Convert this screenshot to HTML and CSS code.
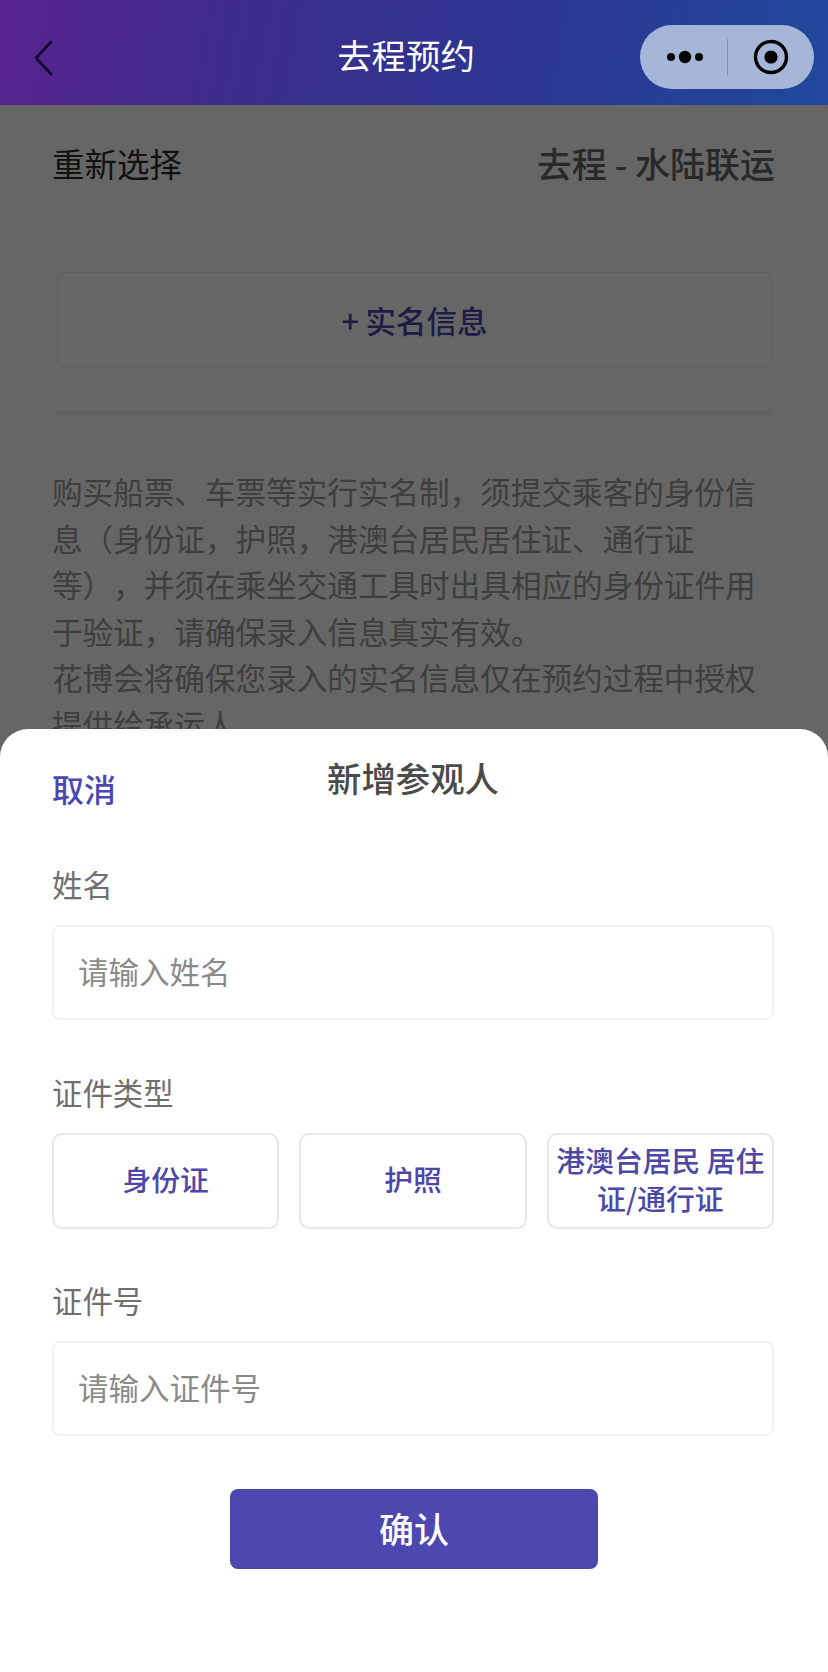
FILE: index.html
```html
<!DOCTYPE html>
<html lang="zh-CN">
<head>
<meta charset="utf-8">
<title>去程预约</title>
<link rel="stylesheet" href="styles.css">
</head>
<body>
<div class="app">
  <header class="nav">
    <svg class="back" viewBox="0 0 20 36" width="20" height="36"><path d="M18 2 L3 18 L18 34" fill="none" stroke="#14082e" stroke-width="2.6" stroke-linecap="round" stroke-linejoin="round"/></svg>
    <h1 class="nav-title">去程预约</h1>
    <div class="capsule">
      <svg class="more" viewBox="0 0 38 14" width="38" height="14"><circle cx="5" cy="7" r="4" fill="#000"/><circle cx="19" cy="7" r="6.2" fill="#000"/><circle cx="33" cy="7" r="4" fill="#000"/></svg>
      <span class="capsule-line"></span>
      <svg class="target" viewBox="0 0 36 36" width="36" height="36"><circle cx="18" cy="18" r="15.5" fill="none" stroke="#000" stroke-width="3.4"/><circle cx="18" cy="18" r="6.6" fill="#000"/></svg>
    </div>
  </header>
  <main class="page">
    <div class="route-row">
      <span class="reselect">重新选择</span>
      <span class="route">去程 - 水陆联运</span>
    </div>
    <div class="add-box">+ 实名信息</div>
    <div class="divider"></div>
    <p class="notice">购买船票、车票等实行实名制，须提交乘客的身份信息（身份证，护照，港澳台居民居住证、通行证<br>等），并须在乘坐交通工具时出具相应的身份证件用<br>于验证，请确保录入信息真实有效。<br>花博会将确保您录入的实名信息仅在预约过程中授权提供给承运人</p>
    <div class="mask"></div>
    <section class="sheet">
      <div class="sheet-head">
        <span class="cancel">取消</span>
        <span class="sheet-title">新增参观人</span>
      </div>
      <div class="label label-name">姓名</div>
      <div class="field">请输入姓名</div>
      <div class="label label-type">证件类型</div>
      <div class="types">
        <div class="type">身份证</div>
        <div class="type">护照</div>
        <div class="type">港澳台居民 居住证/通行证</div>
      </div>
      <div class="label label-no">证件号</div>
      <div class="field">请输入证件号</div>
      <div class="confirm">确认</div>
    </section>
  </main>
</div>
</body>
</html>
```

FILE: styles.css
```css
* { box-sizing: border-box; }
html, body { margin: 0; padding: 0; }
body {
  font-family: "Noto Sans CJK SC", "Noto Sans", sans-serif;
  background: #fff;
  text-spacing-trim: space-all;
}
.app {
  width: 828px;
  height: 1672px;
  display: flex;
  flex-direction: column;
  overflow: hidden;
}
.nav {
  height: 105px;
  flex: none;
  display: flex;
  align-items: center;
  justify-content: center;
  position: relative;
  background: linear-gradient(100deg, #58238f 0%, #3d2c8c 28%, #2d3590 60%, #20489c 100%);
}
.back {
  position: absolute;
  left: 33px;
  top: 40px;
}
.nav-title {
  margin: 2px 16px 0 0;
  font-size: 34.4px;
  font-weight: 400;
  line-height: 44px;
  color: #fff;
}
.capsule {
  position: absolute;
  left: 640px;
  top: 25px;
  width: 174px;
  height: 64px;
  border-radius: 32px;
  background: #a5b6d8;
  display: flex;
  align-items: center;
}
.more { margin-left: 26px; flex: none; }
.capsule-line {
  width: 1px;
  height: 36px;
  margin-left: 23px;
  background: #7f8eae;
  flex: none;
}
.target { margin-left: 25px; flex: none; }
.page {
  flex: 1;
  position: relative;
  background: #fff;
}
.route-row {
  height: 120px;
  padding: 0 53px 4px 52px;
  display: flex;
  justify-content: space-between;
  align-items: center;
}
.reselect { font-size: 32.5px; line-height: 44px; color: #2b2b2b; }
.route { font-size: 35px; line-height: 44px; color: #666; font-weight: 500; }
.add-box {
  margin: 47px 56px 0 57px;
  height: 95px;
  border: 1px solid #e8e8e8;
  border-radius: 8px;
  display: flex;
  align-items: center;
  justify-content: center;
  font-size: 30.5px;
  font-weight: 500;
  color: #4d48b0;
}
.divider {
  margin: 44px 56px 0 57px;
  height: 10px;
  background: linear-gradient(#f0f0f0, #fff);
}
.notice {
  margin: 0;
  padding: 0 53px 0 52px;
  position: relative;
  top: 47px;
  font-size: 30.6px;
  line-height: 46.5px;
  color: #9c9c9c;
}
.mask {
  position: absolute;
  inset: 0;
  background: rgba(0, 0, 0, .6);
}
.sheet {
  position: absolute;
  left: 0;
  right: 0;
  top: 624px;
  bottom: 0;
  background: #fff;
  border-radius: 28px 28px 0 0;
  padding: 0 54px 0 52px;
}
.sheet-head {
  position: relative;
  height: 107px;
}
.cancel {
  position: absolute;
  left: 0;
  top: 36px;
  font-size: 32px;
  line-height: 46px;
  font-weight: 500;
  color: #4d48b0;
}
.sheet-title {
  position: absolute;
  left: 0;
  right: 0;
  top: 25px;
  text-align: center;
  font-size: 34.4px;
  line-height: 46px;
  color: #4a4a4a;
  font-weight: 500;
}
.label {
  font-size: 30.4px;
  line-height: 44px;
  color: #6f6f6f;
}
.label-name { margin-top: 26px; margin-bottom: 19px; }
.label-type { margin-top: 50px; margin-bottom: 19px; }
.label-no { margin-top: 49px; margin-bottom: 19px; }
.field {
  height: 95px;
  border: 2px solid #f1f1f1;
  border-radius: 8px;
  padding: 0 0 4px 24px;
  display: flex;
  align-items: center;
  font-size: 30.5px;
  color: #8a8a8a;
}
.types {
  display: grid;
  grid-template-columns: repeat(3, 1fr);
  gap: 20px;
}
.type {
  height: 96px;
  border: 2px solid #e6e6e6;
  border-radius: 10px;
  display: flex;
  align-items: center;
  justify-content: center;
  text-align: center;
  padding: 0 4px 4px;
  font-size: 28.8px;
  line-height: 38px;
  font-weight: 500;
  color: #4d48a8;
}
.confirm {
  width: 368px;
  height: 80px;
  margin: 53px 0 0 178px;
  border-radius: 8px;
  background: #4d48b0;
  display: flex;
  align-items: center;
  justify-content: center;
  padding-bottom: 4px;
  font-size: 35px;
  font-weight: 500;
  color: #fff;
}
```
